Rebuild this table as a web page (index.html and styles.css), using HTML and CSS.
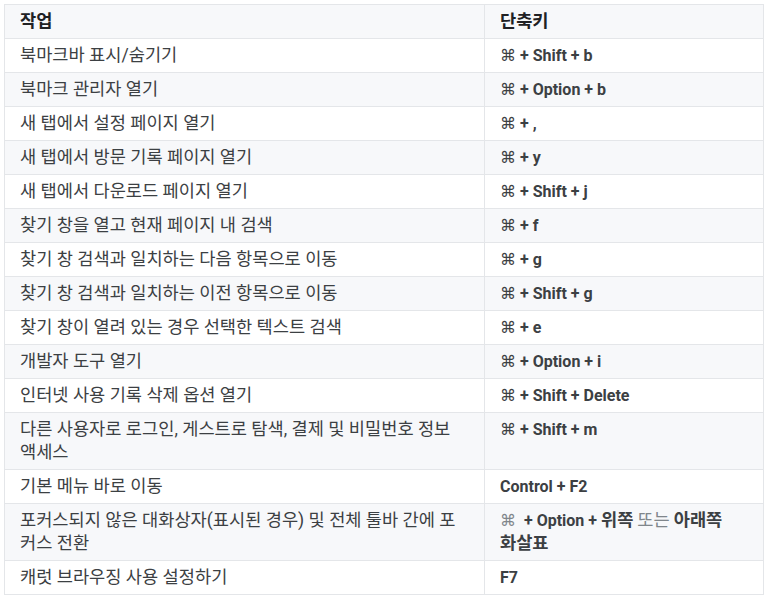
FILE: index.html
```html
<!DOCTYPE html>
<html lang="ko">
<head>
<meta charset="utf-8">
<link rel="stylesheet" href="styles.css">
</head>
<body>
<table class="keys">
  <colgroup><col class="c1"><col class="c2"></colgroup>
  <thead>
    <tr><th>작업</th><th>단축키</th></tr>
  </thead>
  <tbody>
    <tr><td>북마크바 표시/숨기기</td><td class="k"><span class="cmd">⌘</span> + Shift + b</td></tr>
    <tr><td>북마크 관리자 열기</td><td class="k"><span class="cmd">⌘</span> + Option + b</td></tr>
    <tr><td>새 탭에서 설정 페이지 열기</td><td class="k"><span class="cmd">⌘</span> + ,</td></tr>
    <tr><td>새 탭에서 방문 기록 페이지 열기</td><td class="k"><span class="cmd">⌘</span> + y</td></tr>
    <tr><td>새 탭에서 다운로드 페이지 열기</td><td class="k"><span class="cmd">⌘</span> + Shift + j</td></tr>
    <tr><td>찾기 창을 열고 현재 페이지 내 검색</td><td class="k"><span class="cmd">⌘</span> + f</td></tr>
    <tr><td>찾기 창 검색과 일치하는 다음 항목으로 이동</td><td class="k"><span class="cmd">⌘</span> + g</td></tr>
    <tr><td>찾기 창 검색과 일치하는 이전 항목으로 이동</td><td class="k"><span class="cmd">⌘</span> + Shift + g</td></tr>
    <tr><td>찾기 창이 열려 있는 경우 선택한 텍스트 검색</td><td class="k"><span class="cmd">⌘</span> + e</td></tr>
    <tr><td>개발자 도구 열기</td><td class="k"><span class="cmd">⌘</span> + Option + i</td></tr>
    <tr><td>인터넷 사용 기록 삭제 옵션 열기</td><td class="k"><span class="cmd">⌘</span> + Shift + Delete</td></tr>
    <tr><td>다른 사용자로 로그인, 게스트로 탐색, 결제 및 비밀번호 정보 액세스</td><td class="k"><span class="cmd">⌘</span> + Shift + m</td></tr>
    <tr><td>기본 메뉴 바로 이동</td><td class="k">Control + F2</td></tr>
    <tr><td>포커스되지 않은 대화상자(표시된 경우) 및 전체 툴바 간에 포커스 전환</td><td class="k keep"><span class="cmd light">⌘</span>&nbsp; + Option + <span class="ko">위쪽</span> <span class="ko plain">또는</span> <span class="ko">아래쪽 화살표</span></td></tr>
    <tr><td>캐럿 브라우징 사용 설정하기</td><td class="k">F7</td></tr>
  </tbody>
</table>
</body>
</html>
```

FILE: styles.css
```css
html, body {
  margin: 0;
  padding: 0;
  background: #ffffff;
}

body {
  padding: 4px 0 0 4px;
  font-family: Roboto, "Noto Sans CJK KR", sans-serif;
  font-size: 16px;
  color: #3c4043;
}

.keys {
  border-collapse: collapse;
  width: 759px;
  table-layout: fixed;
  border: 1px solid #e4e6e9;
}

.c1 { width: 480px; }
.c2 { width: 279px; }

.keys th,
.keys td {
  border: 1px solid #e4e6e9;
  padding: 5px 15px 5px 15px;
  line-height: 23px;
  text-align: left;
  vertical-align: top;
  font-size: 17.6px;
}

.keys th {
  font-weight: 700;
  background: #f7f8fa;
  color: #202124;
}

.keys tbody tr:nth-child(even) td {
  background: #f7f8fa;
}

.keys td.k {
  font-size: 16px;
  font-weight: 700;
  color: #3c4043;
}

.keys td.keep {
  word-break: keep-all;
}

.ko {
  font-size: 17.6px;
  line-height: 23px;
}

.cmd {
  font-family: "DejaVu Sans", sans-serif;
  font-weight: 400;
  color: #3c4043;
}

.cmd.light {
  color: #80868b;
}

.plain {
  font-weight: 400;
  color: #80868b;
}
```
